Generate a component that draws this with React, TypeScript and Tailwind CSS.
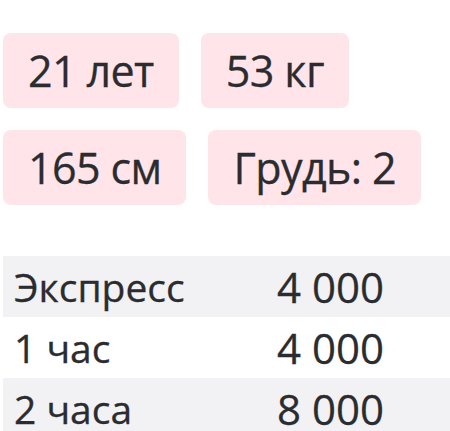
import React from 'react';

const params = ['21 лет', '53 кг', '165 см', 'Грудь: 2'];

const prices = [
  { label: 'Экспресс', value: '4 000' },
  { label: '1 час', value: '4 000' },
  { label: '2 часа', value: '8 000' },
];

export default function App() {
  return (
    <div className="min-h-screen bg-white pl-[3px] pt-[33px] text-[#2b2c30] font-['Open_Sans',sans-serif] [-webkit-text-stroke:0.3px_#2b2c30]">
      {/* Params */}
      <div className="flex flex-wrap gap-x-[22px] gap-y-[22px] w-[430px]">
        {params.map((p) => (
          <div
            key={p}
            className="h-[75px] flex items-center px-[25px] rounded-lg bg-[#ffe5e9] text-[43px] leading-none tracking-[-0.6px]"
          >
            {p}
          </div>
        ))}
      </div>

      {/* Prices */}
      <table className="w-full mt-[51px] border-collapse">
        <tbody>
          {prices.map((row, i) => (
            <tr key={row.label} className={i % 2 === 0 ? 'bg-[#f2f2f4]' : 'bg-white'}>
              <td className="h-[61px] w-[274px] pl-[11px] text-[39px] leading-none">{row.label}</td>
              <td className="h-[61px] text-[42px] leading-none">{row.value}</td>
            </tr>
          ))}
        </tbody>
      </table>
    </div>
  );
}
